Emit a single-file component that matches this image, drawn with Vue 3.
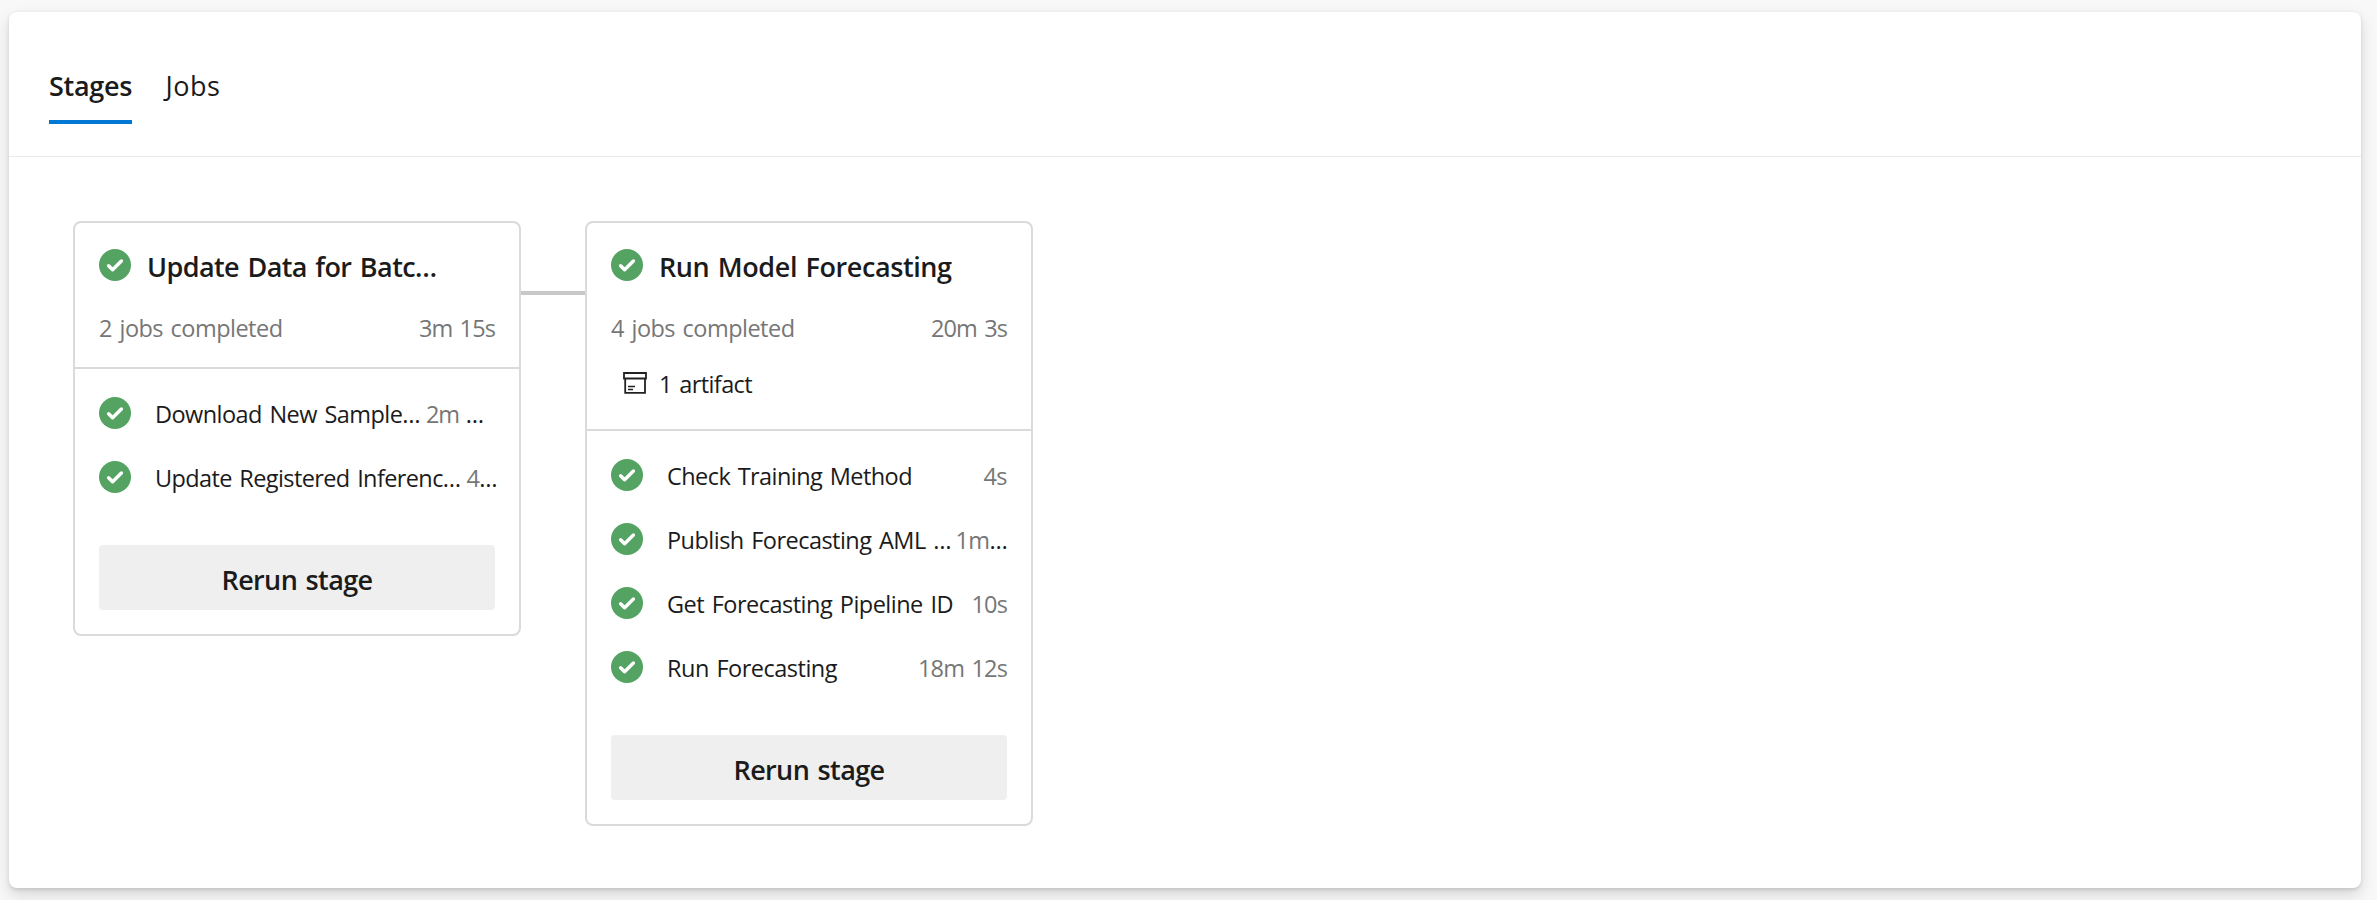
<script setup>
const tabs = [
  { label: 'Stages', w: 83, active: true },
  { label: 'Jobs', w: 55, active: false },
]

const stages = [
  {
    title: 'Update Data for Batc…', titleW: 289.5,
    summary: '2 jobs completed', time: '3m 15s',
    jobs: [
      { name: 'Download New Sample…', w: 265, time: '2m ', cut: true, timeW: 57, tight: true },
      { name: 'Update Registered Inferenc…', w: 305.5, time: '4', cut: true, timeW: 30.5, tight: true },
    ],
  },
  {
    title: 'Run Model Forecasting', titleW: 292.5,
    summary: '4 jobs completed', time: '20m 3s',
    artifact: '1 artifact',
    jobs: [
      { name: 'Check Training Method', w: 245, time: '4s', timeW: 23.5 },
      { name: 'Publish Forecasting AML …', w: 284, time: '1m', cut: true, timeW: 51.5 },
      { name: 'Get Forecasting Pipeline ID', w: 286, time: '10s', timeW: 35.5 },
      { name: 'Run Forecasting', w: 170, time: '18m 12s', timeW: 89 },
    ],
  },
]

// Tracks a label so that it fills the given width.
const vFit = {
  mounted(el, { value }) {
    const natural = el.getBoundingClientRect().width
    el.style.letterSpacing = (value - natural) / el.textContent.length + 'px'
  },
}
</script>

<template>
  <main class="page">
    <section class="panel">
      <nav class="tabs">
        <a v-for="t in tabs" :key="t.label" class="tab" :class="{ active: t.active }"><span v-fit="t.w" class="txt">{{ t.label }}</span></a>
      </nav>
      <div class="graph">
        <template v-for="(s, i) in stages" :key="s.title">
          <div v-if="i" class="link"></div>
          <article class="card">
            <header class="head">
              <div class="title-row">
                <svg class="ok" viewBox="0 0 32 32"><circle cx="16" cy="16" r="16" /><path d="M9.6 16.7 13.6 20.7 22.4 12" /></svg>
                <h2 class="title"><span v-fit="s.titleW" class="txt">{{ s.title }}</span></h2>
              </div>
              <div class="summary">
                <span v-fit="183.5" class="txt">{{ s.summary }}</span>
                <span v-fit="76" class="txt">{{ s.time }}</span>
              </div>
              <div v-if="s.artifact" class="artifact">
                <svg class="box" viewBox="0 0 24 22">
                  <path d="M1 1H23V6.5H1ZM2.2 6.5V20.8H22V6.5" />
                  <path class="thin" d="M5 14.5H12M5 17.5H10" />
                </svg>
                <span v-fit="93" class="txt">{{ s.artifact }}</span>
              </div>
            </header>
            <ul class="jobs">
              <li v-for="j in s.jobs" :key="j.name" class="job">
                <svg class="ok" viewBox="0 0 32 32"><circle cx="16" cy="16" r="16" /><path d="M9.6 16.7 13.6 20.7 22.4 12" /></svg>
                <span v-fit="j.w" class="txt name">{{ j.name }}</span>
                <span v-fit="j.timeW" class="txt time" :class="{ tight: j.tight }">{{ j.time }}<span v-if="j.cut" class="dots">…</span></span>
              </li>
            </ul>
            <button class="rerun"><span v-fit="151" class="txt">Rerun stage</span></button>
          </article>
        </template>
      </div>
    </section>
  </main>
</template>

<style>
body { margin: 0; background: #f8f8f8; }
</style>

<style scoped>
.page {
  box-sizing: border-box;
  height: 900px;
  padding: 12px 16px 12px 9px;
  overflow: hidden;
  background: #f8f8f8;
  color: #1b1b1b;
  font: 370 23.5px/35px "Open Sans", "Noto Sans", sans-serif;
}
.panel {
  box-sizing: border-box;
  width: 2352px;
  height: 876px;
  background: #fff;
  border-radius: 8px;
  box-shadow: 0 6.4px 14.4px rgba(0, 0, 0, 0.132), 0 1.2px 3.6px rgba(0, 0, 0, 0.108);
}
.txt { display: inline-block; white-space: pre; flex: none; word-spacing: 2px; }
.tabs {
  box-sizing: border-box;
  display: flex;
  gap: 33.5px;
  height: 145px;
  padding: 55px 40px 0;
  border-bottom: 1px solid #eaeaea;
}
.tab {
  box-sizing: border-box;
  height: 57px;
  font-size: 27px;
  line-height: 37px;
}
.tab.active { font-weight: 600; border-bottom: 4px solid #0078d4; }
.graph { display: flex; align-items: flex-start; padding: 64px; }
.link { width: 64px; height: 4px; margin-top: 70px; background: #c8c8c8; flex: none; }
.card {
  box-sizing: border-box;
  width: 448px;
  flex: none;
  border: 2px solid #dadada;
  border-radius: 8px;
  padding-bottom: 24px;
}
.head { padding: 26px 24px 23px; border-bottom: 2px solid #dadada; }
.title-row { display: flex; gap: 16px; height: 35px; }
.ok { width: 32px; height: 32px; flex: none; display: block; }
.ok circle { fill: #55a362; }
.ok path { fill: none; stroke: #fff; stroke-width: 3.4; stroke-linecap: round; stroke-linejoin: round; }
.title { margin: 0; font-size: 27px; font-weight: 580; line-height: 35px; }
.summary {
  display: flex;
  justify-content: space-between;
  height: 32px;
  margin-top: 28px;
  line-height: 32px;
  color: #767676;
}
.artifact {
  display: flex;
  gap: 12px;
  height: 32px;
  margin-top: 24px;
  padding: 0 0 6px 12px;
  line-height: 33px;
}
.box { width: 24px; height: 22px; margin-top: 4px; flex: none; }
.box path { fill: none; stroke: #222; stroke-width: 1.8; }
.box .thin { stroke-width: 1.5; }
.jobs {
  display: flex;
  flex-direction: column;
  gap: 32px;
  margin: 0;
  padding: 28px 24px 52px;
  list-style: none;
}
.job { display: flex; height: 32px; }
.name { margin-left: 24px; }
.time { margin-left: auto; color: #767676; }
.time.tight { margin-left: 6px; }
.dots { color: #1b1b1b; }
.rerun {
  display: flex;
  justify-content: center;
  box-sizing: border-box;
  width: 396px;
  height: 65px;
  margin: 0 24px;
  padding: 2px 0 0;
  border: 0;
  border-radius: 4px;
  background: #efefef;
  color: #1b1b1b;
  font: 580 27px/65px "Open Sans", "Noto Sans", sans-serif;
}
</style>
